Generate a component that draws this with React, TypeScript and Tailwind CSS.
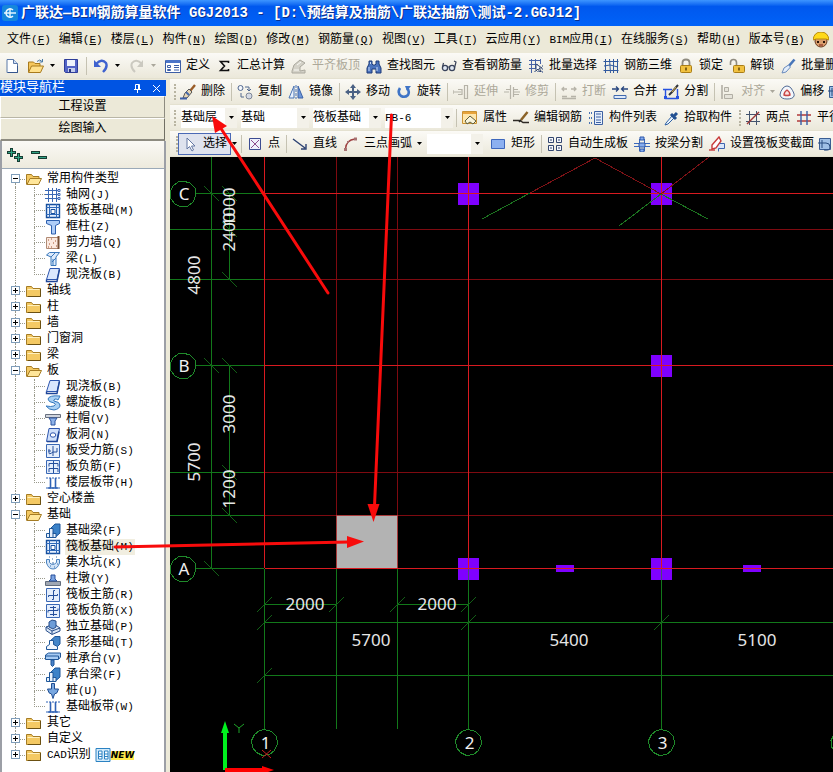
import React from "react";
import clsx from "clsx";

const icons: Record<string, React.ReactNode> = {
  newFile: (
    <>
      <path d="M3 1.5h6.5l4 4v9H3z" fill="#fdfeff" stroke="#5a78a8" />
      <path d="M9.500 1.500v4h4" fill="#cfe0f6" stroke="#5a78a8" />
      <path d="M4 14.500h9.500V8" fill="none" stroke="#35558c" />
    </>
  ),
  open: (
    <>
      <path d="M.5 14V4h5l1.500 1.500h5V8" fill="#f5c75c" stroke="#a87a1c" />
      <path d="M.5 14.500 3.500 8h12l-3 6.500z" fill="#ffe08a" stroke="#a87a1c" />
      <path d="M9 3.500q3-3 5 0M14.500 1v3h-3" fill="none" stroke="#4a7ba8" />
    </>
  ),
  save: (
    <>
      <path d="M1.500 1.500h13v13h-12l-1-1z" fill="#5364c6" stroke="#2e3d99" />
      <path d="M4 2h8v6H4z" fill="#eef2fb" />
      <path d="M5 10h7v4H5z" fill="#c4cdec" />
      <path d="M6 11h2v3H6z" fill="#28357e" />
    </>
  ),
  undo: (
    <>
      <path d="M3 6q6-6 10-1 2 4-3 9" fill="none" stroke="#3f62cf" strokeWidth="2.400" />
      <path d="M1 2v7h7z" fill="#3f62cf" />
    </>
  ),
  redo: (
    <>
      <path d="M13 6q-6-6-10-1-2 4 3 9" fill="none" stroke="#cbc9c0" strokeWidth="2" />
      <path d="M14 2v7H8z" fill="#cbc9c0" />
    </>
  ),
  define: (
    <>
      <path d="M.5 2.500h15v12H.5z" fill="#fff" stroke="#3c5ea6" />
      <path d="M1 2h14v3H1z" fill="#4b74c8" />
      <path d="M2.500 7.500h3v2h-3zM2.500 11.500h3v1h-3zM9 7.500h5M9 9.500h5M9 12h5" fill="none" stroke="#3c5ea6" />
    </>
  ),
  sum: <path d="M12.500 5V3.500h-8l4 4.500-4 4.500h8V11" fill="none" stroke="#111" strokeWidth="1.600" />,
  level: (
    <>
      <path d="M1 13 3 7l6-5 5 3-5 4v4l5-1v3H1z" fill="#d4d2c8" stroke="#aaa89e" />
      <path d="M3 12h5M6 7l4-3" stroke="#f8f8f4" />
    </>
  ),
  find: (
    <>
      <path d="M3 3h3v3l1 1h2l1-1V3h3v3l2 4v5h-5v-4H6v4H1v-5l2-4z" fill="#4a73bd" stroke="#1d3b79" />
      <path d="M3 9v4M11 9v4M4.500 4v2" stroke="#c9dcf8" />
    </>
  ),
  glasses: (
    <>
      <circle cx="4" cy="10" r="2.600" fill="#dfe7f2" stroke="#39435a" strokeWidth="1.300" />
      <circle cx="11" cy="10" r="2.600" fill="#dfe7f2" stroke="#39435a" strokeWidth="1.300" />
      <path d="M6 9h3M1.500 9l1-4M13.500 10l1.500-6-2-1" fill="none" stroke="#39435a" strokeWidth="1.200" />
    </>
  ),
  batchPick: (
    <>
      <path d="M1 2.500h12M1 6.500h9M1 10.500h6M3.500 1v14M7.500 1v10M12.500 1v5" stroke="#4864a8" fill="none" />
      <path d="M6 13.500h9M14.500 7v8" stroke="#8291ae" strokeDasharray="2 1" />
      <path d="M8 6v7l2-2 2 3 1-1-2-3h3z" fill="#fff" stroke="#33466e" />
    </>
  ),
  rebar3d: (
    <path d="M.5 3.500h15M.5 12.500h15M2.500 1v14M6.500 1l1 14M10.500 1v14M14.500 1v14M1 8l6-1 8 2" fill="none" stroke="#31599e" />
  ),
  lock: (
    <>
      <path d="M4.500 8V4.500q0-3 3.500-3t3.500 3V8" fill="none" stroke="#8f8b80" strokeWidth="1.800" />
      <rect x="2.500" y="7.500" width="11" height="7" rx="1" fill="#f1c13f" stroke="#a97d16" />
      <path d="M8 9.500v3" stroke="#6a4c08" strokeWidth="1.600" />
    </>
  ),
  unlock: (
    <>
      <path d="M1.500 7V4.500q0-3 3-3t3 3V8" fill="none" stroke="#8f8b80" strokeWidth="1.600" />
      <rect x="4.500" y="7.500" width="11" height="7" rx="1" fill="#f1c13f" stroke="#a97d16" />
      <path d="M10 9.500v3" stroke="#6a4c08" strokeWidth="1.600" />
    </>
  ),
  brush: (
    <>
      <path d="M14.500 1.500 8 9" stroke="#4876b9" strokeWidth="2.600" />
      <path d="m8.500 7 2 2L6 14l-4 1 2-5z" fill="#e2edfb" stroke="#6b8cbd" />
    </>
  ),
  erase: (
    <>
      <path d="m15 1-5 6" stroke="#9a5c27" strokeWidth="2.400" />
      <path d="m9 5 3 3-5 6H3l2-5z" fill="#e7d6b5" stroke="#555" />
      <path d="M0 14.500h7" stroke="#3d5ea8" strokeWidth="2" />
      <path d="m6 8 3 3" stroke="#4567a8" strokeWidth="2" />
    </>
  ),
  copy: (
    <>
      <circle cx="3.500" cy="4" r="2.500" fill="#f4f7fc" stroke="#51688f" />
      <circle cx="12" cy="12" r="3" fill="#d5dae4" stroke="#7c8698" />
      <path d="M8 3h4v4M10 5l2 2 2-2M4 9v4h3" fill="none" stroke="#51688f" />
    </>
  ),
  mirror: (
    <>
      <path d="M6 2v12H1z" fill="#e9f1fc" stroke="#4973b4" />
      <path d="M10 2v12h5z" fill="#6d96d8" stroke="#3c63a8" />
      <path d="M8 1v14" stroke="#4973b4" strokeDasharray="3 1" />
    </>
  ),
  move: (
    <>
      <path d="M8 2v12M2 8h12" stroke="#4a6184" strokeWidth="2" />
      <path d="M8 0l3 4H5zM8 16l3-4H5zM0 8l4-3v6zM16 8l-4-3v6z" fill="#4a6184" />
    </>
  ),
  rotate: (
    <>
      <path d="M4 4q-3 5 1 8 4 2 7-1 2-4-1-7" fill="none" stroke="#3f74c6" strokeWidth="2.600" />
      <path d="M9 2h6l-4 5z" fill="#3f74c6" />
    </>
  ),
  extend: (
    <path d="M0 8h8M0 6v4M5 5.500h4v5H5M11.500 1v14M14.500 1v14M11 1.500h4M11 14.500h4" fill="none" stroke="#b6b3a8" strokeWidth="1.200" />
  ),
  trim: <path d="M0 8h5M10 8h6M6.500 1v14M9.500 3v10M2 5.500h4M10 5.500h4M10 10.500h5" fill="none" stroke="#b6b3a8" strokeWidth="1.200" />,
  breakAt: (
    <path d="M1 5h5M10 5h5M3 3 1 5l2 2M13 3l2 2-2 2M1 12.500h5M10 12.500h5M1 14.500h14" fill="none" stroke="#b6b3a8" strokeWidth="1.300" />
  ),
  merge: (
    <>
      <path d="M0 5h6M16 5h-6M4 2.500 6.500 5 4 7.500M12 2.500 9.500 5 12 7.500" fill="none" stroke="#27457f" strokeWidth="1.300" />
      <path d="M2 11.500h12v3H2z" fill="#dfeafa" stroke="#4169ad" />
    </>
  ),
  split: (
    <>
      <path d="M2.500 5v9.500h12V5M0 5.500h9" fill="none" stroke="#2752e0" strokeWidth="1.400" />
      <path d="M1 12h3v3H1zM13 12h3v3h-3z" fill="#2752e0" />
      <path d="M15 1 9 8l-3 3" stroke="#32363e" strokeWidth="2" />
      <path d="m13 3-4 5" stroke="#e0b04a" />
    </>
  ),
  align: (
    <>
      <path d="M2 1v14" stroke="#b1aea4" strokeWidth="1.600" />
      <path d="M4.500 3.500h4v4h-4zM4.500 10.500h8v4h-8z" fill="#e5e3da" stroke="#b1aea4" />
    </>
  ),
  offset: (
    <>
      <path d="M1 11q0-3 3-7 4-4 8 0 4 6 3 8-1 3-7 3t-7-4z" fill="#f3f7fc" stroke="#526b96" />
      <path d="M5 11q0-3 3-5 3 2 3 5-3 1-6 0z" fill="#fae2e2" stroke="#c84646" strokeWidth="1.400" />
    </>
  ),
  props: (
    <>
      <path d="M.5 1.500h14v12H.5z" fill="#ffe7ac" stroke="#c99334" />
      <path d="M1 2h13v2H1z" fill="#e7a33b" />
      <path d="m3 11 5-5 6 5-3 3-3-2-3 2z" fill="#f7f3db" stroke="#5d5c3b" />
    </>
  ),
  editRebar: (
    <>
      <path d="M0 10.500h7l3 2h6" fill="none" stroke="#2e2a24" strokeWidth="1.400" />
      <path d="M14.500 2 8 10" stroke="#8b6226" strokeWidth="2.400" />
      <path d="m8 10-2 2" stroke="#222" strokeWidth="1.600" />
    </>
  ),
  list: (
    <>
      <path d="M1 3h3M1 8h3M1 13h3" stroke="#4973b4" strokeWidth="2" strokeDasharray="1 1" />
      <path d="M6.500 1.500h8v13h-8z" fill="#e5eefb" stroke="#3d61a2" />
      <path d="M8 4h5M8 7h5M8 10h5M8 12.500h5" stroke="#3d61a2" />
    </>
  ),
  picker: (
    <>
      <path d="m3 13 6-7 2 2-6 6-3 1z" fill="#eaf3fd" stroke="#2f62a4" />
      <path d="m8 4 5 5M11 6l3-3" stroke="#245192" strokeWidth="3" />
    </>
  ),
  twoPoint: (
    <>
      <path d="M1 4.500h14M1 11.500h14M4.500 1v14M11.500 1v14" stroke="#44546e" fill="none" />
      <path d="M2 14 14 2" stroke="#9c3838" strokeWidth="1.400" />
    </>
  ),
  parallel: (
    <>
      <path d="M1 5h14M1 11h14" stroke="#b13a3a" strokeWidth="1.400" />
      <path d="M5 1v14M11 1v14" stroke="#365fa8" strokeWidth="1.400" />
    </>
  ),
  cursor: <path d="M5 2v11l2.500-2.500L10 15l1.500-1-2-4H13z" fill="#fff" stroke="#6478a4" />,
  point: (
    <>
      <path d="M2.500 2.500h11v11h-11z" fill="#eef0fb" stroke="#3c4c92" />
      <path d="m4 4 8 8M12 4l-8 8" stroke="#8c4b8c" />
    </>
  ),
  line: <path d="m1 3 12 9M14 8v5H9" fill="none" stroke="#2c4273" strokeWidth="1.400" />,
  arc: (
    <>
      <path d="M2.500 13Q3 4 12 3" fill="none" stroke="#9e4141" strokeWidth="1.400" />
      <path d="M1 12h3v3H1zM11 1.500h3v3h-3zM4 5h2v2H4z" fill="#a77272" />
    </>
  ),
  rect: <path d="M1.500 3.500h13v9h-13z" fill="#8cb0f0" stroke="#3d67bd" />,
  autoSlab: (
    <path d="M1.500 1.500h5v5h-5zM9.500 1.500h5v5h-5zM1.500 9.500h5v5h-5zM9.500 9.500h5v5h-5zM3 4h2M11 4h2M3 12h2M11 12h2" fill="#f5f7fc" stroke="#33466f" />
  ),
  beamSplit: (
    <>
      <path d="M0 7.500h16M0 10.500h16M5.500 3v12M10.500 3v12" stroke="#3b69bc" fill="none" />
      <path d="M6 1h4v3H6zM5 7h6v4H5zM6 13h4v3H6z" fill="#86adf0" stroke="#2c57a8" />
    </>
  ),
  section: (
    <>
      <path d="M5.500 7.500h10v5h-6v3" fill="#dae7fb" stroke="#3e65ae" />
      <path d="m10 1-7 8v4l4-1 5-7z" fill="#fff" stroke="#c73a3a" strokeWidth="1.400" />
      <path d="M0 14h6" stroke="#c73a3a" strokeWidth="1.400" />
    </>
  ),
  viewBox: (
    <>
      <path d="M2.500 2.500h11v11h-11z" fill="#9fc0e6" stroke="#3a5e94" />
      <path d="M1 7h8q4 0 4 4t-6 3M5 4v8" fill="none" stroke="#294c80" />
    </>
  ),
  folder: (
    <>
      <path d="M.5 13.500V3.500h5l1.500 2h7.500v8z" fill="#f4c963" stroke="#a57c25" />
      <path d="M1.500 6.500h12" stroke="#fff0bd" />
      <path d="M14.500 6v7.500H2" fill="none" stroke="#6b5012" />
    </>
  ),
  folderOpen: (
    <>
      <path d="M.5 13.500V3.500h5l1.500 2h6V8" fill="#f4c963" stroke="#a57c25" />
      <path d="M1 13.500 4 7.500h11.500l-3 6z" fill="#ffe69a" stroke="#a57c25" />
    </>
  ),
  grid: (
    <>
      <path d="M0 3.500h15M0 7.500h15M0 11.500h15M3.500 1v14M7.500 1v14M11.500 1v14" stroke="#3c69b4" />
      <path d="M13 2.500h2v2h-2zM13 6.500h2v2h-2zM13 10.500h2v2h-2z" fill="#fff" stroke="#3c69b4" />
    </>
  ),
  raft: (
    <>
      <path d="M1.500 1.500h13v13h-13z" fill="#e7f1ff" stroke="#164f9e" strokeWidth="1.400" />
      <path d="M4.500 1v14M11.500 1v14M1 4.500h14M1 11.500h14" stroke="#2f69b8" />
      <path d="M6 6.500h4v4H6z" fill="#fff" stroke="#164f9e" />
    </>
  ),
  column: <path d="M1.500 1.500h13v3l-4 2v8.500h-4V6.500l-5-2z" fill="#aecdf8" stroke="#2c5fae" />,
  wall: (
    <>
      <path d="M1.500 2.500h12v11h-12z" fill="#fbe9df" stroke="#b08a74" />
      <path d="M3 5h1M6 4h1M10 6h1M4 9h1M8 8h1M11 11h1M6 12h1M3 12h1" stroke="#a2532f" />
      <path d="M13.500 1v13" stroke="#7a5137" strokeWidth="2" />
    </>
  ),
  beam: (
    <>
      <path d="m1.500 4 3-2.500h10L11 6v8.500H6V6z" fill="#dceafb" stroke="#3b78bb" />
      <path d="M6 6 10 2M7 11l4-4M8 14V8" stroke="#3b78bb" />
    </>
  ),
  slab: (
    <>
      <path d="M5 1.500h9.500L12 12.500H1.500z" fill="#d9e6fd" stroke="#2e56ae" />
      <path d="M1.500 12.500v2H12l2.500-12" fill="none" stroke="#1f4699" strokeWidth="1.400" />
    </>
  ),
  spiral: (
    <path d="M15 1Q4 0 3 4q0 3 6 4 3 1 0 3-3 1-8 0 3 4 8 4 6-1 6-5 0-3-6-4-1-1 1-2 2 0 3 1z" fill="#a9d0f4" stroke="#3477bd" />
  ),
  cap: (
    <>
      <path d="M.5 3.500h15v3H.5z" fill="#d0d4dc" stroke="#676f7e" />
      <path d="M4 7h8l-2 3v4H6v-4z" fill="#8fb3e8" stroke="#2c55a0" />
    </>
  ),
  hole: (
    <>
      <path d="M4 1.500h10.500L12 14.500H1.500z" fill="#cfe0fb" stroke="#2e56ae" />
      <ellipse cx="8" cy="8" rx="2.800" ry="2.200" fill="#fff" stroke="#2e56ae" />
      <path d="M2 14.500h10l2-10" fill="none" stroke="#1f4699" strokeWidth="1.600" />
    </>
  ),
  rebarA: (
    <>
      <path d="M1.500 1.500h13v13h-13z" fill="#e4eefc" stroke="#3a68b5" />
      <path d="M8 3v10M4 6v4q0 2 4-1h4V5M3 8h3" fill="none" stroke="#244f9c" />
    </>
  ),
  rebarB: (
    <>
      <path d="M1.500 1.500h13v13h-13z" fill="#e4eefc" stroke="#3a68b5" />
      <path d="M8.500 2v12M4 7.500V4.500h9v3M4 13v-3.500h9V13" fill="none" stroke="#244f9c" />
    </>
  ),
  rebarC: (
    <>
      <path d="M1.500 1.500h13v13h-13z" fill="#e4eefc" stroke="#3a68b5" />
      <path d="M8.500 3v10M3 9.500v-2h10v-2M5 11.500h7M5 4.500h6" fill="none" stroke="#244f9c" />
    </>
  ),
  rebarD: (
    <>
      <path d="M1.500 1.500h13v13h-13z" fill="#e4eefc" stroke="#3a68b5" />
      <path d="M10 3.500H8.500v9H7M3.500 10V8.500h9V7" fill="none" stroke="#244f9c" />
    </>
  ),
  strip: (
    <>
      <path d="M1 3h14M1 13h14" stroke="#2f62b5" strokeDasharray="2 1" />
      <path d="M5.500 3v10M10.500 3v10M3 13h10" stroke="#2f62b5" strokeWidth="1.600" />
    </>
  ),
  foundBeam: (
    <>
      <path d="M6 5 10 1h5v9l-5 4.500z" fill="#3c82c8" stroke="#1f5799" />
      <path d="M1.500 14.500v-4h3v-5h3.500v5h3v4z" fill="#e7f1fd" stroke="#1f5799" />
      <path d="M4.500 10v4M8 10v4" stroke="#1f5799" />
    </>
  ),
  pit: (
    <>
      <path d="M1.500 4.500h3v3q3 4 7 0v-3h3V8q-2 6-6.500 6T1.500 8z" fill="#d2e4f8" stroke="#4a82bf" />
      <path d="M4 2h1M7 4h1M11 2h1M7 8h2M5 11h1M9 12h1M12 9h1" stroke="#3a6fab" />
    </>
  ),
  pier: (
    <>
      <path d="M.5 10.500h15v4H.5z" fill="#9fa7b3" stroke="#626c7b" />
      <path d="m4 10 2-2V4h4v4l2 2z" fill="#7ba4e2" stroke="#264f9a" />
    </>
  ),
  isolated: (
    <>
      <path d="m1 8 8-3 6 4v3l-8 3.500-6-4z" fill="#dbe7f6" stroke="#284e8a" />
      <path d="M4 8V3l3-2 4 1v6l-3 2z" fill="#6d9dd8" stroke="#284e8a" />
      <path d="m1 8 6 4 8-3M7 12v3" fill="none" stroke="#284e8a" />
    </>
  ),
  stripFound: (
    <>
      <path d="m5 6 5-4.500h5V9l-3 3z" fill="#4385c9" stroke="#1f5799" />
      <path d="M1.500 14.500v-3l3-2v-4h4v4l4 2v3z" fill="#f2f7fe" stroke="#1f5799" />
    </>
  ),
  pileCap: (
    <>
      <path d="m.5 4 3-2h12v4l-2 2.500H.5z" fill="#a7cbf3" stroke="#1f5799" />
      <path d="M6 9v5l1.500 1.500L9 14V9z" fill="#4b83c8" stroke="#1f5799" />
      <path d="M.5 5h13v3" fill="none" stroke="#1f5799" />
    </>
  ),
  pile: <path d="M6.500.5h3V6h4q-1 5-4 5L8 15.500 6.500 11q-3 0-4-5h4z" fill="#79a7df" stroke="#1f4d92" />,
  cad: (
    <>
      <path d="M1 1.500h14v13H1z" fill="#d3ebfb" stroke="#2b82c2" />
      <path d="M3.500 4h3.500v8H3.500zM9.500 4H13v8H9.500zM3.500 7H7M9.500 7H13M3.500 9.500H7M9.500 9.500H13" fill="#fff" stroke="#2b82c2" />
    </>
  ),
};

const Icon = ({ name }: { name: string }) => (
  <svg width="16" height="16" viewBox="0 0 16 16" className="shrink-0" aria-hidden="true">
    {icons[name]}
  </svg>
);

interface LabelProps {
  text: string;
  mnemonic?: boolean;
}

// Latin runs are set smaller so that one letter takes about half of a Chinese character
const Label = ({ text, mnemonic }: LabelProps) => (
  <span className="whitespace-pre">
    {text.split(/([\x20-\x7e]+)/).map((part, i) => {
      if (i % 2 === 0) return part;
      const key = mnemonic && part.match(/^\((\w)\)$/);
      return (
        <span key={i} className="text-[11px]">
          {key ? (
            <>
              (<u>{key[1]}</u>)
            </>
          ) : (
            part
          )}
        </span>
      );
    })}
  </span>
);

const Caret = ({ muted }: { muted?: boolean }) => (
  <svg width="5" height="3" viewBox="0 0 5 3" className={clsx("shrink-0", muted ? "fill-[#aaa79b]" : "fill-black")} aria-hidden="true">
    <path d="M0 0h5L2.500 3z" />
  </svg>
);

interface ToolProps {
  icon: string;
  label: string;
  disabled?: boolean;
  active?: boolean;
}

const Tool = ({ icon, label, disabled, active }: ToolProps) => (
  <button
    type="button"
    disabled={disabled}
    className={clsx(
      "flex h-5 shrink-0 items-center gap-[5px] px-[3px]",
      disabled && "text-[#aca899]",
      active && "bg-[#dfe3ee] outline outline-[#4a69b5]"
    )}
  >
    <Icon name={icon} />
    <Label text={label} />
  </button>
);

const IconButton = ({ icon, label }: { icon: string; label: string }) => (
  <button type="button" aria-label={label} className="shrink-0">
    <Icon name={icon} />
  </button>
);

const MoreButton = ({ label, muted }: { label: string; muted?: boolean }) => (
  <button type="button" aria-label={label} className="flex h-5 w-2 shrink-0 items-center justify-center">
    <Caret muted={muted} />
  </button>
);

const Sep = () => (
  <span className="flex w-[6px] shrink-0 justify-center">
    <span className="h-[18px] w-px bg-[#c5c2b2]" />
  </span>
);

const Grip = () => <span className="mr-px ml-1 h-4 w-[2px] shrink-0 border-l-2 border-dotted border-[#b8b4a2]" />;

interface ComboProps {
  label: string;
  value: string;
  className: string;
}

const Combo = ({ label, value, className }: ComboProps) => (
  <span className={clsx("relative flex h-5 shrink-0 items-center bg-white", className)}>
    <select aria-label={label} className="h-5 w-full appearance-none bg-transparent pr-3 outline-none">
      <option>{value}</option>
    </select>
    <span className="pointer-events-none absolute inset-y-0 right-0 flex w-3 items-center justify-center bg-[#f3f1e9]">
      <Caret />
    </span>
  </span>
);

const bar = "flex h-[26px] items-center overflow-hidden border-b border-[#e4e1d0] bg-linear-to-b from-[#fbfaf6] to-[#ebe8da]";

const menus = [
  "文件(F)", "编辑(E)", "楼层(L)", "构件(N)", "绘图(D)", "修改(M)", "钢筋量(Q)", "视图(V)",
  "工具(T)", "云应用(Y)", "BIM应用(I)", "在线服务(S)", "帮助(H)", "版本号(B)",
];

interface TreeGroup {
  name: string;
  items?: [string, string][];
}

const tree: TreeGroup[] = [
  {
    name: "常用构件类型",
    items: [
      ["grid", "轴网(J)"],
      ["raft", "筏板基础(M)"],
      ["column", "框柱(Z)"],
      ["wall", "剪力墙(Q)"],
      ["beam", "梁(L)"],
      ["slab", "现浇板(B)"],
    ],
  },
  { name: "轴线" },
  { name: "柱" },
  { name: "墙" },
  { name: "门窗洞" },
  { name: "梁" },
  {
    name: "板",
    items: [
      ["slab", "现浇板(B)"],
      ["spiral", "螺旋板(B)"],
      ["cap", "柱帽(V)"],
      ["hole", "板洞(N)"],
      ["rebarA", "板受力筋(S)"],
      ["rebarB", "板负筋(F)"],
      ["strip", "楼层板带(H)"],
    ],
  },
  { name: "空心楼盖" },
  {
    name: "基础",
    items: [
      ["foundBeam", "基础梁(F)"],
      ["raft", "筏板基础(M)"],
      ["pit", "集水坑(K)"],
      ["pier", "柱墩(Y)"],
      ["rebarD", "筏板主筋(R)"],
      ["rebarC", "筏板负筋(X)"],
      ["isolated", "独立基础(P)"],
      ["stripFound", "条形基础(T)"],
      ["pileCap", "桩承台(V)"],
      ["foundBeam", "承台梁(F)"],
      ["pile", "桩(U)"],
      ["strip", "基础板带(W)"],
    ],
  },
  { name: "其它" },
  { name: "自定义" },
  { name: "CAD识别" },
];

const dots = "border-dotted border-[#9a9a8c]";

const Tree = () => (
  <ul>
    {tree.map(({ name, items }, g) => {
      const last = g === tree.length - 1;
      return (
        <li key={name}>
          <div className="flex h-4 items-center pl-[9px]">
            <span className="flex h-4 w-[9px] flex-col items-center">
              <span className={clsx("h-[3px]", g > 0 && "border-l", dots)} />
              <button
                type="button"
                aria-label={(items ? "收起" : "展开") + name}
                className="flex size-[9px] shrink-0 items-center justify-center border border-[#7f9db9] bg-white"
              >
                <svg width="5" height="5" viewBox="0 0 5 5" aria-hidden="true">
                  <path d={items ? "M0 2h5v1H0z" : "M0 2h2V0h1v2h2v1H3v2H2V3H0z"} />
                </svg>
              </button>
              <span className={clsx("h-1", !last && "border-l", dots)} />
            </span>
            <span className={clsx("mr-px w-[5px] border-t", dots)} />
            <Icon name={items ? "folderOpen" : "folder"} />
            <span className="ml-[5px] flex items-center gap-1">
              <Label text={name} />
              {last && (
                <>
                  <Icon name="cad" />
                  <span className="-ml-1 bg-[#ffe94a] text-[9px] leading-[9px] font-black italic font-['DejaVu_Sans',sans-serif]">NEW</span>
                </>
              )}
            </span>
          </div>
          {items && (
            <ul>
              {items.map(([icon, label], i) => (
                <li key={label} className="flex h-4 items-center pl-[13px]">
                  <span className={clsx("h-4 w-[19px] shrink-0 border-l", dots)} />
                  <span className="flex h-4 w-[11px] shrink-0 flex-col">
                    <span className={clsx("h-2 border-b border-l", dots)} />
                    <span className={clsx("h-2", i < items.length - 1 && "border-l", dots)} />
                  </span>
                  <Icon name={icon} />
                  <span className={clsx("ml-1 flex h-4 items-center px-px", g === 8 && i === 1 && "bg-[#f1eee0]")}>
                    <Label text={label} />
                  </span>
                </li>
              ))}
            </ul>
          )}
        </li>
      );
    })}
  </ul>
);

const Sidebar = () => (
  <aside className="mr-1 flex w-[166px] shrink-0 flex-col pt-px">
    <div className="flex h-4 items-center bg-[#0054e3] pr-[5px] text-[13px] leading-4 text-white">
      <h2 className="grow">模块导航栏</h2>
      <button type="button" aria-label="固定" className="mr-[10px]">
        <svg width="9" height="9" viewBox="0 0 9 9" fill="none" stroke="#fff">
          <path d="M2.500 5V.5h4V5M5.500 1v4M1 5.500h7M4.500 6v3" />
        </svg>
      </button>
      <button type="button" aria-label="关闭">
        <svg width="9" height="9" viewBox="0 0 9 9" fill="none" stroke="#fff">
          <path d="m1 1 7 7M8 1 1 8" />
        </svg>
      </button>
    </div>
    <button type="button" className="mr-px h-[22px] border border-t-white border-r-[#8d8b80] border-b-[#b9b6a6] border-l-white">
      工程设置
    </button>
    <button type="button" className="mr-px h-[23px] border border-t-white border-r-[#716f64] border-b-2 border-b-[#8d8b80] border-l-white">
      绘图输入
    </button>
    <div className="flex grow flex-col border-r-2 border-l-2 border-r-[#9c9fa6] border-l-[#9c9fa6]">
      <div className="flex h-[27px] items-center gap-2 bg-linear-to-b from-[#faf9f5] to-[#edeadd] pl-[5px]">
        <button type="button" aria-label="全部展开">
          <svg width="16" height="15" viewBox="0 0 16 15">
            <path d="M0 4h3V1h3v3h3v3H6v3H3V7H0zM7 9h3V6h3v3h3v3h-3v3h-3v-3H7z" fill="#173c33" />
            <path d="M1 5.500h7M4.500 2v7M8 10.500h7M11.500 7v7" stroke="#2fa383" />
          </svg>
        </button>
        <button type="button" aria-label="全部收起">
          <svg width="16" height="15" viewBox="0 0 16 15">
            <path d="M0 4h9v3H0zM7 9h9v3H7z" fill="#173c33" />
            <path d="M1 5.500h7M8 10.500h7" stroke="#2fa383" />
          </svg>
        </button>
      </div>
      <div className="grow border-t border-[#9aa9b8] bg-white pt-0.5">
        <Tree />
      </div>
    </div>
  </aside>
);

const axisRows = [193.5, 365.5, 568.5];
const subRows = [229.5, 279.5, 472.5, 515.5];
const axisCols = [264.5, 468.5, 661.5];
const subCols = [336.5, 397.5];

const columns = [
  [458, 183], [651, 183], [651, 355], [458, 558], [651, 558],
];

const bubbles: [number, number, string][] = [
  [183, 194, "C"], [183, 366, "B"], [183, 569, "A"],
  [264.5, 742.5, "1"], [468.5, 742.5, "2"], [661.5, 742.5, "3"], [844, 742.5, "4"],
];

const verticalDims: [number, number, string][] = [
  [194, 275, "4800"], [194, 462, "5700"], [229, 207, "1000"], [229, 232, "2400"], [229, 414, "3000"], [229, 489, "1200"],
];

const horizontalDims: [number, number, string][] = [
  [305, 604, "2000"], [437, 604, "2000"], [371, 640, "5700"], [569, 640, "5400"], [757, 640, "5100"],
];

const fallingTicks = [[211, 193], [229, 193], [229, 229], [229, 279], [211, 365], [229, 365], [229, 472], [229, 515], [211, 568]];
const risingTicks = [[264, 604], [336, 604], [397, 604], [468, 604], [264, 622], [468, 622], [661, 622], [264, 675]];

const far = 4000;

const Drawing = () => (
  <svg className="absolute inset-0 size-full bg-black font-['Noto_Sans',sans-serif]" role="img" aria-label="绘图区">
    <g transform="translate(-170 -157)" fill="none">
      <g shapeRendering="crispEdges">
        <g stroke="#12781a">
          {axisRows.map((y) => <path key={y} d={`M196 ${y}H264`} />)}
          {subRows.map((y) => <path key={y} d={`M170 ${y}H264`} />)}
          {axisCols.map((x) => <path key={x} d={`M${x} 569V730`} />)}
          {subCols.map((x) => <path key={x} d={`M${x} 569V729`} />)}
          <path d="M211.500 157V568M229.500 193V279M229.500 365V515" />
          <path d={`M264 604.500H336M397 604.500H468M264 622.500H${far}M264 675.500H${far}`} />
        </g>
        <g stroke="#125f16">
          {fallingTicks.map(([x, y]) => <path key={`${x}-${y}`} d={`M${x - 7} ${y - 7}l15 15`} />)}
          {risingTicks.map(([x, y]) => <path key={`${x}-${y}`} d={`M${x - 7} ${y + 8}l15 -15`} />)}
        </g>
        <g stroke="#7e0a10">
          {subRows.map((y) => <path key={y} d={`M265 ${y}H${far}`} />)}
          {subCols.map((x) => <path key={x} d={`M${x} 157V568`} />)}
        </g>
        <g fill="#7f00ff">
          {columns.map(([x, y]) => <rect key={`${x}-${y}`} x={x} y={y} width="21" height="22" />)}
          <rect x="556" y="565" width="18" height="7" />
          <rect x="743" y="565" width="18" height="7" />
        </g>
        <rect x="337" y="516" width="60" height="52" fill="#b3b3b3" />
        <g stroke="#d81a20">
          {axisRows.map((y) => <path key={y} d={`M265 ${y}H${far}`} />)}
          {axisCols.map((x) => <path key={x} d={`M${x} 157V568`} />)}
        </g>
        <path d="M336.500 568V515.500H397.500V568" stroke="#a83a3a" />
        <path d="M468.500 569v11M661.500 569v11" stroke="#4d4a70" />
        <path d="M530 193l65-35 66 36 48-37" stroke="#7e1216" />
        <path d="M482 219l48-26M619 226l42-32 47 25" stroke="#1c7420" />
      </g>

      {bubbles.map(([x, y, name]) => (
        <g key={name}>
          <polygon
            points="0,-13 7,-11 12,-6 13,1 10,8 5,12 -2,13 -8,10 -12,5 -13,-2 -10,-8 -5,-12"
            transform={`translate(${x} ${y})`}
            stroke="#1f8a2a"
            shapeRendering="crispEdges"
          />
          <text x={x + 1} y={y + 6} fill="#f0f0f0" fontSize="17" textAnchor="middle">{name}</text>
        </g>
      ))}
      <g fill="#e6e6e6" fontSize="17" textAnchor="middle">
        {horizontalDims.map(([x, y, value]) => (
          <text key={`${x}-${y}`} x={x} y={y + 6}>{value}</text>
        ))}
        {verticalDims.map(([x, y, value]) => (
          <text key={`${x}-${y}`} transform={`translate(${x + 6} ${y}) rotate(-90)`}>{value}</text>
        ))}
      </g>

      <path d="M223 770V733h-2l4-12 4 12h-2v37z" fill="#00f01e" />
      <path d="M225 768h37v-2l12 4-12 4v-2h-37z" fill="#f00" />
      <path d="m234 724 5 4 5-4M239 728v5" stroke="#1fa52a" />
      <path d="m262 750 9 8M271 750l-9 8" stroke="#c42020" />
    </g>
  </svg>
);

const Arrows = () => (
  <svg className="pointer-events-none absolute inset-0 size-full" aria-hidden="true">
    <g stroke="#f80b0b" strokeWidth="3" strokeLinecap="round">
      <path d="M328 293 220 127" />
      <path d="M391.500 115 374.500 506" />
      <path d="M115 547 349 542" />
    </g>
    <g fill="#f80b0b">
      <path d="m212 116 15 10-12 7z" />
      <path d="m373.500 522-6-18h12z" />
      <path d="m364 541.500-17-5.500v12z" />
    </g>
  </svg>
);

export default function App() {
  return (
    <div className="relative flex min-h-screen flex-col overflow-hidden bg-[#ece9d8] text-xs leading-4 text-black font-['Liberation_Mono','Noto_Sans_CJK_SC',monospace]">
      <header>
        <div className="flex h-[26px] items-center gap-[3px] bg-linear-to-b from-[#3d95ff] via-[#0058ee] via-25% to-[#0062f8] pl-[2px] text-white">
          <svg width="16" height="16" viewBox="0 0 16 16" aria-hidden="true">
            <rect width="16" height="16" rx="3" fill="#1687dc" />
            <path d="M2 8h12M8 3v10M11 5q-2-2-4-1-3 1-3 4t3 4q2 1 4-1" fill="none" stroke="#e4f6ff" strokeWidth="1.400" />
          </svg>
          <h1 className="text-sm font-bold whitespace-nowrap [text-shadow:1px_1px_#0a2f8c]">
            广联达—BIM钢筋算量软件 GGJ2013 - [D:\预结算及抽筋\广联达抽筋\测试-2.GGJ12]
          </h1>
        </div>
        <nav className="flex h-[27px] items-center gap-2 overflow-hidden pl-[7px]">
          {menus.map((menu) => (
            <button type="button" key={menu} className="shrink-0">
              <Label text={menu} mnemonic />
            </button>
          ))}
          <svg width="16" height="16" viewBox="0 0 16 16" className="shrink-0" aria-hidden="true">
            <circle cx="8" cy="9" r="6" fill="#d99e6c" stroke="#6b3a1e" />
            <path d="M0 8Q1 0 8 0t8 8l-3-1H3z" fill="#ffd91a" stroke="#b98b0c" />
            <path d="M5 9v2M11 9v2" stroke="#2a1408" strokeWidth="2" />
            <path d="M6 13h4" stroke="#7a1d14" />
          </svg>
        </nav>
        <div className={clsx(bar, "pl-1")}>
          <IconButton icon="newFile" label="新建" />
          <span className="flex shrink-0 items-center gap-1 pl-2">
            <IconButton icon="open" label="打开" />
            <MoreButton label="最近文件" />
          </span>
          <span className="flex shrink-0 items-center gap-1 pr-1 pl-[7px]">
            <IconButton icon="save" label="保存" />
          </span>
          <Sep />
          <span className="flex shrink-0 items-center gap-1 pl-1">
            <IconButton icon="undo" label="撤销" />
            <MoreButton label="撤销列表" />
          </span>
          <span className="mr-[5px] flex shrink-0 items-center gap-1 pl-2">
            <IconButton icon="redo" label="恢复" />
            <MoreButton label="恢复列表" muted />
          </span>
          <Tool icon="define" label="定义" />
          <Tool icon="sum" label="汇总计算" />
          <Tool icon="level" label="平齐板顶" disabled />
          <Tool icon="find" label="查找图元" />
          <Tool icon="glasses" label="查看钢筋量" />
          <Tool icon="batchPick" label="批量选择" />
          <Tool icon="rebar3d" label="钢筋三维" />
          <Tool icon="lock" label="锁定" />
          <Tool icon="unlock" label="解锁" />
          <Tool icon="brush" label="批量删除" />
        </div>
      </header>

      <div className="flex grow">
        <Sidebar />
        <main className="flex min-w-0 grow flex-col">
          <div className={bar}>
            <Grip />
            <Tool icon="erase" label="删除" />
            <Sep />
            <Tool icon="copy" label="复制" />
            <Tool icon="mirror" label="镜像" />
            <Sep />
            <Tool icon="move" label="移动" />
            <Tool icon="rotate" label="旋转" />
            <Sep />
            <Tool icon="extend" label="延伸" disabled />
            <Tool icon="trim" label="修剪" disabled />
            <Sep />
            <Tool icon="breakAt" label="打断" disabled />
            <Tool icon="merge" label="合并" />
            <Tool icon="split" label="分割" />
            <Sep />
            <Tool icon="align" label="对齐" disabled />
            <MoreButton label="对齐方式" muted />
            <Tool icon="offset" label="偏移" />
            <IconButton icon="viewBox" label="拉伸" />
          </div>
          <div className={bar}>
            <Grip />
            <span className="flex shrink-0 gap-1 pl-1">
              <Combo label="楼层" value="基础层" className="w-14" />
              <Combo label="构件类型" value="基础" className="w-[68px]" />
              <Combo label="构件" value="筏板基础" className="w-[68px]" />
              <Combo label="构件名称" value="FB-6" className="w-[68px] text-[11px]" />
            </span>
            <Sep />
            <Tool icon="props" label="属性" />
            <Tool icon="editRebar" label="编辑钢筋" />
            <Tool icon="list" label="构件列表" />
            <Tool icon="picker" label="拾取构件" />
            <Grip />
            <Tool icon="twoPoint" label="两点" />
            <Tool icon="parallel" label="平行" />
          </div>
          <div className={clsx(bar, "pl-0.5")}>
            <Grip />
            <Tool icon="cursor" label="选择" active />
            <MoreButton label="选择方式" />
            <Sep />
            <Tool icon="point" label="点" />
            <Sep />
            <Tool icon="line" label="直线" />
            <Tool icon="arc" label="三点画弧" />
            <MoreButton label="画弧方式" />
            <span className="flex shrink-0 px-1">
              <Combo label="画法" value="" className="w-14" />
            </span>
            <Tool icon="rect" label="矩形" />
            <Sep />
            <Tool icon="autoSlab" label="自动生成板" />
            <Tool icon="beamSplit" label="按梁分割" />
            <Tool icon="section" label="设置筏板变截面" />
            <IconButton icon="viewBox" label="查看板" />
          </div>
          <div className="relative grow">
            <Drawing />
          </div>
        </main>
      </div>
      <Arrows />
    </div>
  );
}
